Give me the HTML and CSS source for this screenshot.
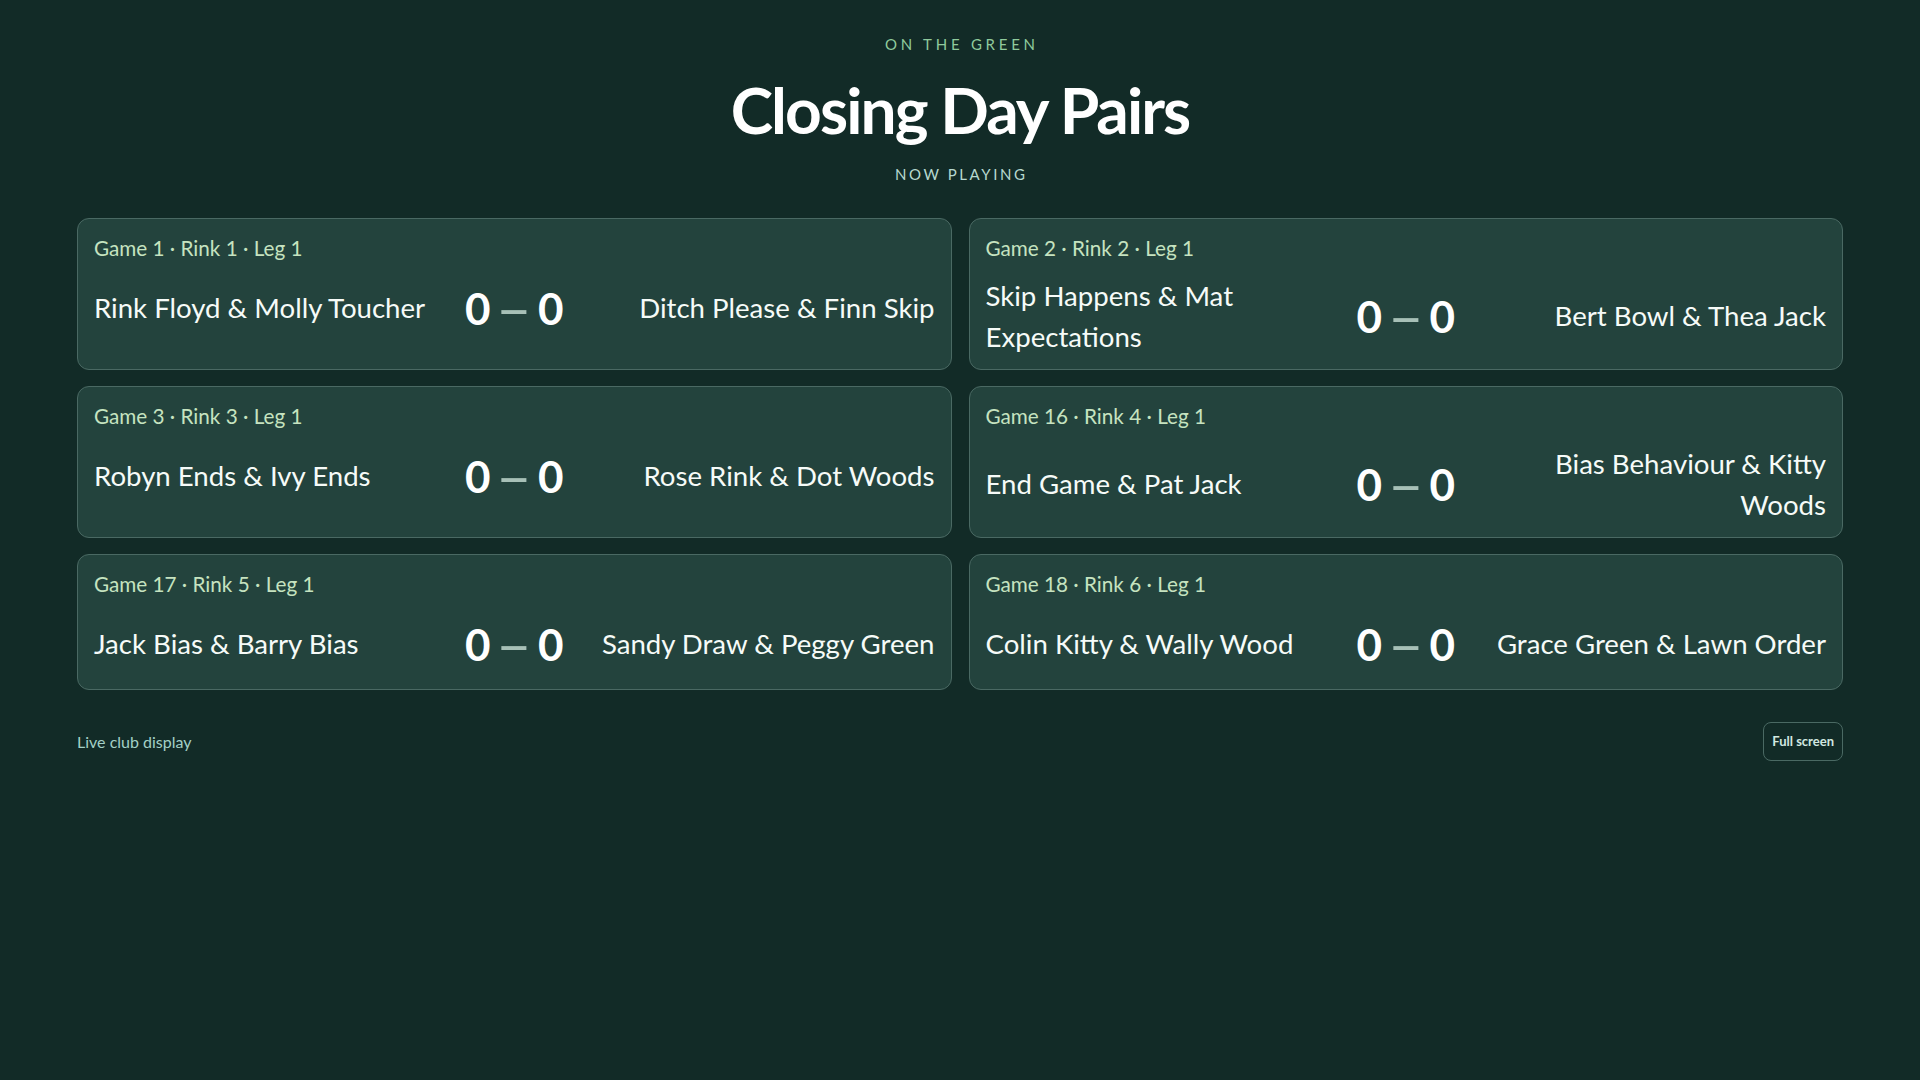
FILE: index.html
```html
<!DOCTYPE html>
<html lang="en">
<head>
    <meta charset="UTF-8">
    <meta name="viewport" content="width=device-width, initial-scale=1.0">
    <title>Closing Day Pairs</title>
    <link rel="stylesheet" href="styles.css">
</head>
<body>
    <div class="page">
        <header class="header">
            <div class="eyebrow">On the green</div>
            <h1 class="title">Closing Day Pairs</h1>
            <div class="status">Now playing</div>
        </header>

        <div class="games">
            <div class="card">
                <div class="meta">Game 1 · Rink 1 · Leg 1</div>
                <div class="match">
                    <div class="team">Rink Floyd &amp; Molly Toucher</div>
                    <div class="score"><span>0</span><span class="dash">–</span><span>0</span></div>
                    <div class="team away">Ditch Please &amp; Finn Skip</div>
                </div>
            </div>
            <div class="card">
                <div class="meta">Game 2 · Rink 2 · Leg 1</div>
                <div class="match">
                    <div class="team">Skip Happens &amp; Mat Expectations</div>
                    <div class="score"><span>0</span><span class="dash">–</span><span>0</span></div>
                    <div class="team away">Bert Bowl &amp; Thea Jack</div>
                </div>
            </div>
            <div class="card">
                <div class="meta">Game 3 · Rink 3 · Leg 1</div>
                <div class="match">
                    <div class="team">Robyn Ends &amp; Ivy Ends</div>
                    <div class="score"><span>0</span><span class="dash">–</span><span>0</span></div>
                    <div class="team away">Rose Rink &amp; Dot Woods</div>
                </div>
            </div>
            <div class="card">
                <div class="meta">Game 16 · Rink 4 · Leg 1</div>
                <div class="match">
                    <div class="team">End Game &amp; Pat Jack</div>
                    <div class="score"><span>0</span><span class="dash">–</span><span>0</span></div>
                    <div class="team away">Bias Behaviour &amp; Kitty Woods</div>
                </div>
            </div>
            <div class="card">
                <div class="meta">Game 17 · Rink 5 · Leg 1</div>
                <div class="match">
                    <div class="team">Jack Bias &amp; Barry Bias</div>
                    <div class="score"><span>0</span><span class="dash">–</span><span>0</span></div>
                    <div class="team away">Sandy Draw &amp; Peggy Green</div>
                </div>
            </div>
            <div class="card">
                <div class="meta">Game 18 · Rink 6 · Leg 1</div>
                <div class="match">
                    <div class="team">Colin Kitty &amp; Wally Wood</div>
                    <div class="score"><span>0</span><span class="dash">–</span><span>0</span></div>
                    <div class="team away">Grace Green &amp; Lawn Order</div>
                </div>
            </div>
        </div>

        <footer class="footer">
            <span class="footer-note">Live club display</span>
            <button class="fullscreen" id="fullscreenBtn">Full screen</button>
        </footer>
    </div>
</body>
</html>
```

FILE: styles.css
```css
* {
    margin: 0;
    padding: 0;
    box-sizing: border-box;
}
body {
    font-family: 'Lato', 'Open Sans', sans-serif;
    background: #122b27;
    color: #fff;
    min-height: 100vh;
}
.page {
    padding: 33px 77px 40px;
}
.header {
    text-align: center;
}
.eyebrow {
    font-size: 15px;
    line-height: 22px;
    letter-spacing: 0.25em;
    text-transform: uppercase;
    color: #8fca9c;
    padding-left: 0.25em;
}
.title {
    margin-top: 20px;
    font-size: 64px;
    line-height: 70px;
    font-weight: 700;
    letter-spacing: -0.03em;
    color: #fff;
}
.status {
    margin-top: 18px;
    font-size: 15px;
    line-height: 22px;
    letter-spacing: 0.17em;
    text-transform: uppercase;
    color: #b6d8cf;
    padding-left: 0.17em;
}
.games {
    margin-top: 33px;
    display: grid;
    grid-template-columns: 1fr 1fr;
    column-gap: 17px;
    row-gap: 16px;
}
.card {
    background: #23433d;
    border: 1px solid #4a6963;
    border-radius: 12px;
    padding: 14px 16px 12.5px;
    display: flex;
    flex-direction: column;
    gap: 10.5px;
}
.meta {
    font-size: 20.7px;
    line-height: 31px;
    color: #c6e3c0;
}
.match {
    display: grid;
    grid-template-columns: 1fr auto 1fr;
    gap: 20px;
    align-items: center;
}
.team {
    font-size: 27.6px;
    line-height: 41px;
    color: #f6fbf8;
}
.team.away {
    text-align: right;
}
.score {
    display: flex;
    align-items: center;
    gap: 11px;
    font-size: 44px;
    line-height: 66px;
    font-weight: 700;
    color: #fff;
}
.score .dash {
    display: inline-block;
    transform: scaleX(1.4);
    color: #a7c0b7;
}
.footer {
    margin-top: 32px;
    display: flex;
    justify-content: space-between;
    align-items: center;
}
.footer-note {
    font-size: 16px;
    color: #a3d0c6;
}
.fullscreen {
    font-family: inherit;
    font-size: 13px;
    font-weight: 700;
    line-height: 17px;
    padding: 10px 8px;
    background: transparent;
    color: #d2e8e0;
    border: 1px solid #4a6963;
    border-radius: 8px;
    cursor: pointer;
}
.fullscreen:hover {
    background: #23433d;
}
```
